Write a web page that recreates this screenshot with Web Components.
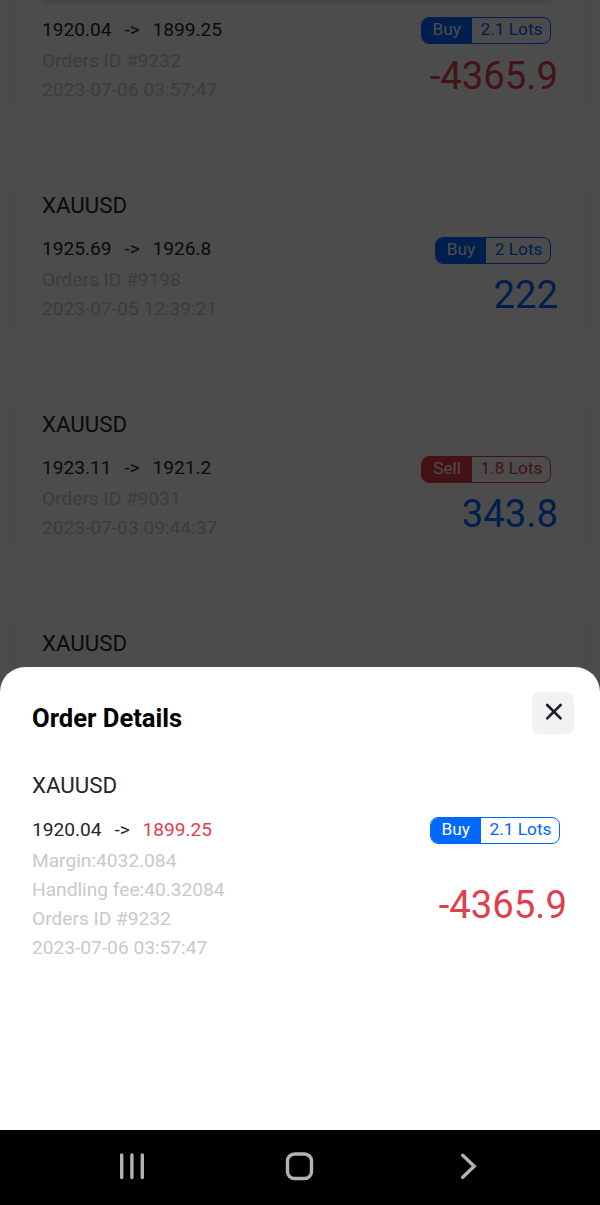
<!DOCTYPE html>
<html lang="en">
<head>
<meta charset="utf-8">
<title>Order Details</title>
<style>
  html, body { margin: 0; height: 100%; }
  body {
    font-family: Roboto, "Liberation Sans", sans-serif;
    color: #23262d;
    background: #000;
    overflow: hidden;
  }
</style>
</head>
<body>
<trade-app>
  <order-card slot="orders" open="1920.04" close="1899.25" side="Buy" lots="2.1 Lots" profit="-4365.9">
    <span>Orders ID #9232</span>
    <span>2023-07-06 03:57:47</span>
  </order-card>
  <order-card slot="orders" symbol="XAUUSD" open="1925.69" close="1926.8" side="Buy" lots="2 Lots" profit="222">
    <span>Orders ID #9198</span>
    <span>2023-07-05 12:39:21</span>
  </order-card>
  <order-card slot="orders" symbol="XAUUSD" open="1923.11" close="1921.2" side="Sell" lots="1.8 Lots" profit="343.8">
    <span>Orders ID #9031</span>
    <span>2023-07-03 09:44:37</span>
  </order-card>
  <order-card slot="orders" symbol="XAUUSD"></order-card>

  <bottom-sheet slot="sheet" heading="Order Details">
    <order-info symbol="XAUUSD" open="1920.04" close="1899.25" side="Buy" lots="2.1 Lots" profit="-4365.9" marked>
      <span>Margin:4032.084</span>
      <span>Handling fee:40.32084</span>
      <span>Orders ID #9232</span>
      <span>2023-07-06 03:57:47</span>
    </order-info>
  </bottom-sheet>

  <nav-bar slot="nav"></nav-bar>
</trade-app>

<script>
class TradeApp extends HTMLElement {
  constructor() {
    super();
    this.attachShadow({mode: 'open'});
    this.shadowRoot.innerHTML = `
      <style>
        :host {
          display: flex;
          flex-direction: column;
          height: 1205px;
        }
        main {
          position: relative;
          flex: 1;
          min-height: 0;
          overflow: hidden;
          background: #fff;
        }
        /* scrolled list */
        #list {
          display: flex;
          flex-direction: column;
          gap: 29.2px;
          margin-top: -57.6px;
          padding: 0 16px;
        }
        #overlay {
          position: absolute;
          inset: 0;
          background: rgba(0, 0, 0, 0.7);
        }
        #top {
          position: absolute;
          top: -20px;
          left: 42px;
          right: 48px;
          height: 20px;
          box-shadow: 0 0 7px rgba(0, 0, 0, 0.28);
        }
        slot[name="sheet"] {
          display: block;
          position: absolute;
          left: 0;
          right: 0;
          bottom: 0;
        }
      </style>
      <main>
        <div id="list"><slot name="orders"></slot></div>
        <div id="top"></div>
        <div id="overlay"></div>
        <slot name="sheet"></slot>
      </main>
      <slot name="nav"></slot>
    `;
  }
}

class SideTag extends HTMLElement {
  constructor() {
    super();
    this.attachShadow({mode: 'open'});
    this.shadowRoot.innerHTML = `
      <style>
        :host {
          --tag: #0068ff;
          display: flex;
          box-sizing: border-box;
          height: 27px;
          border: 1.5px solid var(--tag);
          border-radius: 8px;
          overflow: hidden;
          font-size: 17.3px;
          line-height: 22px;
          color: var(--tag);
        }
        :host([side="Sell"]) {
          --tag: #e23c48;
        }
        #side {
          padding: 0 11px;
          color: #fff;
          background: var(--tag);
        }
        #lots {
          padding: 0 7.5px 0 8.5px;
          white-space: nowrap;
        }
      </style>
      <span id="side"></span>
      <span id="lots"><slot></slot></span>
    `;
  }

  static get observedAttributes() {
    return ['side'];
  }

  attributeChangedCallback(name, oldValue, value) {
    this.shadowRoot.querySelector('#side').textContent = value;
  }
}

class OrderInfo extends HTMLElement {
  constructor() {
    super();
    this.attachShadow({mode: 'open'});
    this.shadowRoot.innerHTML = `
      <style>
        :host {
          display: block;
        }
        #symbol {
          height: 44px;
          font-size: 22.3px;
          line-height: 44px;
        }
        .row {
          display: flex;
          align-items: center;
          justify-content: space-between;
        }
        #prices {
          box-sizing: border-box;
          height: 34px;
          margin-top: 4.5px;
          padding-top: 2px;
          font-size: 19.15px;
          line-height: 32px;
        }
        #quote {
          display: flex;
          gap: 12.8px;
        }
        :host([marked]) #close {
          color: #e0404e;
        }
        side-tag {
          margin: 2px 7px 0 0;
        }
        #meta {
          display: flex;
          flex-direction: column;
          color: #c8c9cc;
          font-size: 19.15px;
          line-height: 29px;
        }
        #profit {
          color: #0068ff;
          font-size: 38.3px;
          line-height: 44px;
          padding-top: 2px;
        }
        #profit.loss {
          color: #e0404e;
        }
      </style>
      <div id="symbol"></div>
      <div id="body">
        <div class="row" id="prices">
          <div id="quote"><span id="open"></span><span>-&gt;</span><span id="close"></span></div>
          <side-tag></side-tag>
        </div>
        <div class="row">
          <div id="meta"><slot></slot></div>
          <div id="profit"></div>
        </div>
      </div>
    `;
  }

  connectedCallback() {
    const root = this.shadowRoot;
    root.querySelector('#symbol').textContent = this.getAttribute('symbol') || '';
    if (!this.hasAttribute('open')) {
      root.querySelector('#body').hidden = true;
      return;
    }
    root.querySelector('#open').textContent = this.getAttribute('open');
    root.querySelector('#close').textContent = this.getAttribute('close');
    const tag = root.querySelector('side-tag');
    tag.setAttribute('side', this.getAttribute('side'));
    tag.textContent = this.getAttribute('lots');
    const profit = root.querySelector('#profit');
    profit.textContent = this.getAttribute('profit');
    profit.classList.toggle('loss', parseFloat(profit.textContent) < 0);
  }
}

class OrderCard extends HTMLElement {
  constructor() {
    super();
    this.attachShadow({mode: 'open'});
    this.shadowRoot.innerHTML = `
      <style>
        :host {
          display: block;
          box-sizing: border-box;
          height: 190px;
          padding: 21px 26px 0;
          border-radius: 15px;
          background: #fff;
          box-shadow: 0 0 15px rgba(0, 0, 0, 0.05);
        }
      </style>
    `;
    // attributes have to be there before the info element is connected
    const info = document.createElement('order-info');
    for (const name of ['symbol', 'open', 'close', 'side', 'lots', 'profit']) {
      if (this.hasAttribute(name)) {
        info.setAttribute(name, this.getAttribute(name));
      }
    }
    info.append(document.createElement('slot'));
    this.shadowRoot.append(info);
  }
}

class BottomSheet extends HTMLElement {
  constructor() {
    super();
    this.attachShadow({mode: 'open'});
    this.shadowRoot.innerHTML = `
      <style>
        :host {
          display: block;
          box-sizing: border-box;
          height: 462.6px;
          padding: 25px 26px 0 32px;
          border-radius: 25px 25px 0 0;
          background: #fff;
        }
        header {
          display: flex;
          justify-content: space-between;
          height: 71px;
        }
        h2 {
          margin: 0;
          color: #000;
          font-size: 25.6px;
          font-weight: 700;
          line-height: 52px;
        }
        button {
          display: flex;
          width: 42px;
          height: 42px;
          padding: 0;
          border: none;
          border-radius: 8px;
          background: #f2f2f2;
        }
        #content {
          padding-right: 7px;
        }
      </style>
      <header>
        <h2></h2>
        <button aria-label="Close">
          <svg width="42" height="42" viewBox="0 0 42 42" fill="none" stroke="#1c1f2a" stroke-width="2.7" stroke-linecap="round">
            <path d="M15.2 13l13.4 13.4M28.6 13l-13.4 13.4"/>
          </svg>
        </button>
      </header>
      <div id="content"><slot></slot></div>
    `;
  }

  connectedCallback() {
    this.shadowRoot.querySelector('h2').textContent = this.getAttribute('heading');
  }
}

class NavBar extends HTMLElement {
  constructor() {
    super();
    this.attachShadow({mode: 'open'});
    this.shadowRoot.innerHTML = `
      <style>
        :host {
          display: flex;
          justify-content: space-between;
          box-sizing: border-box;
          height: 75px;
          padding: 18px 114px 0;
          background: #000;
        }
        svg {
          width: 36px;
          height: 36px;
          fill: none;
          stroke: #b2b2b2;
          stroke-width: 3.4;
          stroke-linecap: round;
        }
      </style>
      <svg viewBox="0 0 36 36"><path d="M7.7 7v22.5M17.9 7v22.5M28.3 7v22.5"/></svg>
      <svg viewBox="0 0 36 36"><rect x="5.5" y="6" width="24" height="24.5" rx="7"/></svg>
      <svg viewBox="0 0 36 36"><path d="M12.7 7.3L24.2 18.3L12.7 29.3"/></svg>
    `;
  }
}

customElements.define('side-tag', SideTag);
customElements.define('order-info', OrderInfo);
customElements.define('order-card', OrderCard);
customElements.define('bottom-sheet', BottomSheet);
customElements.define('nav-bar', NavBar);
customElements.define('trade-app', TradeApp);
</script>
</body>
</html>
